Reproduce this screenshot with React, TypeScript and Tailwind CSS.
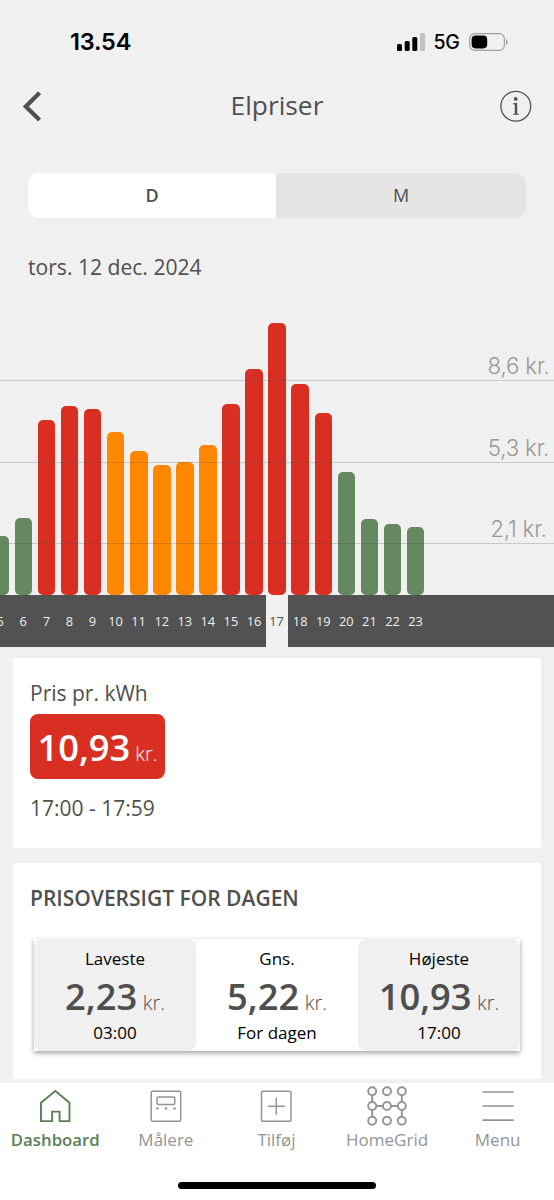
import React from "react";

type Level = "low" | "mid" | "high";

const HOURS: { hour: number; height: number; level: Level }[] = [
  { hour: 5, height: 59.5, level: "low" },
  { hour: 6, height: 77.5, level: "low" },
  { hour: 7, height: 175.7, level: "high" },
  { hour: 8, height: 189, level: "high" },
  { hour: 9, height: 186.5, level: "high" },
  { hour: 10, height: 163.3, level: "mid" },
  { hour: 11, height: 144.8, level: "mid" },
  { hour: 12, height: 130.8, level: "mid" },
  { hour: 13, height: 133.3, level: "mid" },
  { hour: 14, height: 150.4, level: "mid" },
  { hour: 15, height: 191.6, level: "high" },
  { hour: 16, height: 226.4, level: "high" },
  { hour: 17, height: 272.2, level: "high" },
  { hour: 18, height: 211.4, level: "high" },
  { hour: 19, height: 182.6, level: "high" },
  { hour: 20, height: 123.5, level: "low" },
  { hour: 21, height: 76.4, level: "low" },
  { hour: 22, height: 71.4, level: "low" },
  { hour: 23, height: 68.4, level: "low" },
];

const LEVEL_COLOR: Record<Level, string> = {
  low: "bg-[#64885f]",
  mid: "bg-[#ff8800]",
  high: "bg-[#d82f22]",
};

const SELECTED_HOUR = 17;

function StatusBar() {
  return (
    <div className="flex h-[72px] items-start justify-between pl-[70px] pr-[46px] pt-[27px] font-['Inter',sans-serif] text-black">
      <span className="text-[23.5px] font-semibold leading-[29px] tracking-[-0.2px]">13.54</span>
      <div className="flex h-[29px] items-center">
        <svg width="28" height="18" viewBox="0 0 28 18">
          <rect x="0" y="11" width="5" height="7" rx="1.5" />
          <rect x="7.7" y="8" width="5" height="10" rx="1.5" />
          <rect x="15.3" y="4" width="5" height="14" rx="1.5" />
          <rect x="23" y="0" width="5" height="18" rx="1.5" fill="#c2c2c2" />
        </svg>
        <span className="ml-[8.5px] w-[27px] pt-[2px] text-[19.5px] font-medium leading-[29px] tracking-[-0.3px]">5G</span>
        <svg className="ml-[8.5px]" width="39" height="18" viewBox="0 0 39 18">
          <rect x="0.6" y="0.6" width="34.8" height="16.8" rx="5.2" fill="none" stroke="#a0a0a0" strokeWidth="1.2" />
          <rect x="2.6" y="2.6" width="15.6" height="12.8" rx="3.8" />
          <path d="M37 6v6c1.1-.5 1.7-1.7 1.7-3S38.100 6.500 37 6z" fill="#a0a0a0" />
        </svg>
      </div>
    </div>
  );
}

function Header() {
  return (
    <header className="flex h-[68px] items-center justify-between pl-[22px] pr-[22px]">
      <svg width="32" height="32" viewBox="0 0 32 32" fill="none" stroke="#4f4f4f" strokeWidth="4.2">
        <path d="M17.6 2.800 3.800 16.500 17.600 30" />
      </svg>
      <h1 className="pb-[2px] text-[26.3px] leading-[34px] text-[#4f4f4f]">Elpriser</h1>
      <svg width="32" height="32" viewBox="0 0 32 32" fill="none" stroke="#4f4f4f">
        <circle cx="15.800" cy="16.200" r="14.900" strokeWidth="1.300" />
        <circle cx="15.700" cy="8.900" r="1.900" fill="#4f4f4f" stroke="none" />
        <path
          d="M13 13.300c1.700 0 2.800-.3 4.200-.8v10.300c0 .9.400 1.100 1.800 1.200v.8h-6v-.8c1.400-.1 1.800-.3 1.800-1.200v-7.300c0-1-.5-1.300-1.800-1.300z"
          fill="#4f4f4f"
          stroke="none"
        />
      </svg>
    </header>
  );
}

function PeriodSwitch() {
  return (
    <div className="mx-7 mt-[33px] flex h-[45px] overflow-hidden rounded-[11px] bg-[#e5e5e5] text-[18px] leading-[45px] text-[#4f4f4f]">
      <div className="w-[248px] rounded-r-[2px] bg-white text-center font-semibold">D</div>
      <div className="flex-1 text-center font-medium">M</div>
    </div>
  );
}

function GridLine({ label, size }: { label: string; size: string }) {
  return (
    <div className={`flex flex-col justify-end border-b border-[#4f4f4f]/25 ${size}`}>
      <span className="w-[71px] self-end pb-px text-center font-['Inter',sans-serif] text-[22.3px] font-light leading-[26px] tracking-[-0.2px] text-[#999]">
        {label}
      </span>
    </div>
  );
}

function PriceChart() {
  return (
    <section className="mt-[17px] w-full overflow-hidden">
      <div className="grid h-[296.4px] grid-cols-1 grid-rows-1">
        <div className="col-start-1 row-start-1 -ml-[11.3px] flex items-end">
          {HOURS.map(({ hour, height, level }) => (
            <div key={hour} className="flex w-[23.08px] shrink-0 justify-center">
              <div className={`w-[17.6px] rounded-[5px] ${LEVEL_COLOR[level]}`} style={{ height }} />
            </div>
          ))}
        </div>
        <div className="z-10 col-start-1 row-start-1 flex flex-col">
          <GridLine label="8,6 kr." size="h-[82px]" />
          <GridLine label="5,3 kr." size="h-[82px]" />
          <GridLine label="2,1 kr." size="h-[81px]" />
        </div>
      </div>
      <div className="flex h-[52px] bg-[#525252] text-[12.8px] leading-[52px] text-[#f0f0f0]">
        <div className="-ml-[11.4px] flex">
          {HOURS.map(({ hour }) => (
            <div
              key={hour}
              className={
                hour === SELECTED_HOUR
                  ? "w-[23.08px] shrink-0 border-r border-[#525252] bg-[#f0f0f0] text-center text-[#4f4f4f]"
                  : "w-[23.08px] shrink-0 text-center"
              }
            >
              {hour}
            </div>
          ))}
        </div>
      </div>
    </section>
  );
}

function CurrentPrice() {
  return (
    <section className="mx-[13px] mt-[10.6px] h-[190px] rounded-[2px] bg-white px-[17px] pt-[20px] text-[21px] text-[#4f4f4f]">
      <p className="leading-[30px]">Pris pr. kWh</p>
      <div className="mt-[6px] flex h-[65px] w-[135px] items-baseline justify-center rounded-[8px] bg-[#d82f22] leading-[67px] text-white">
        <span className="text-[36.3px] font-semibold">10,93</span>
        <span className="ml-[5px] text-[20px] font-light">kr.</span>
      </div>
      <p className="mt-[14px] leading-[30px]">17:00 - 17:59</p>
    </section>
  );
}

function Stat({ title, value, note, shaded }: { title: string; value: string; note: string; shaded?: boolean }) {
  return (
    <div className={`flex-1 pt-[8px] text-center text-[17px] text-black ${shaded ? "rounded-[8px] bg-[#f0f0f0]" : "bg-white"}`}>
      <p className="leading-[24px]">{title}</p>
      <p className="flex h-[50px] items-baseline justify-center leading-[51px] text-[#4f4f4f]">
        <span className="text-[36.3px] font-semibold">{value}</span>
        <span className="ml-[5.5px] text-[20px] font-light">kr.</span>
      </p>
      <p className="leading-[24px]">{note}</p>
    </div>
  );
}

function DayOverview() {
  return (
    <section className="mx-[13px] mt-[15px] h-[216px] shrink-0 rounded-[2px] bg-white pl-[17px] pr-[17px] pt-[20px]">
      <h2 className="text-[21px] font-[550] leading-[30px] text-[#4f4f4f]">PRISOVERSIGT FOR DAGEN</h2>
      <div className="ml-[4px] mr-[4px] mt-[26px] flex h-[112px] bg-white shadow-[0_2px_5px_rgba(0,0,0,0.38)]">
        <Stat title="Laveste" value="2,23" note="03:00" shaded />
        <Stat title="Gns." value="5,22" note="For dagen" />
        <Stat title="Højeste" value="10,93" note="17:00" shaded />
      </div>
    </section>
  );
}

function HomeIcon() {
  return (
    <svg width="40" height="40" viewBox="0 0 40 40" fill="none" stroke="currentColor" strokeWidth="1.900">
      <path d="M6 16.800 20.300 5l14.200 11.800v18.300H24.600v-9.500h-7.500v9.500H6z" />
    </svg>
  );
}

function MeterIcon() {
  return (
    <svg width="40" height="40" viewBox="0 0 40 40" fill="none" stroke="currentColor" strokeWidth="1.500">
      <rect x="5.200" y="5.300" width="29.500" height="30" rx="1.500" />
      <rect x="11" y="11.100" width="17.800" height="7.500" rx="1.500" />
      <g fill="currentColor" stroke="none">
        <circle cx="11.500" cy="22.500" r="1.200" />
        <circle cx="20" cy="22.500" r="1.200" />
        <circle cx="28.500" cy="22.500" r="1.200" />
      </g>
    </svg>
  );
}

function AddIcon() {
  return (
    <svg width="40" height="40" viewBox="0 0 40 40" fill="none" stroke="currentColor" strokeWidth="1.500">
      <rect x="5.500" y="5.300" width="29.500" height="30" rx="1.500" />
      <path d="M20.300 11.800v17M11.800 20.300h17" />
    </svg>
  );
}

function HomeGridIcon() {
  const points = [5.2, 20, 34.8];
  return (
    <svg width="40" height="40" viewBox="0 0 40 40" fill="none" stroke="currentColor" strokeWidth="1.900">
      <path d="M5.200 9v7M5.200 24v7M34.800 9v7M34.800 24v7M9 20h7M24 20h7" />
      {points.map((y) => points.map((x) => <circle key={`${x}-${y}`} cx={x} cy={y} r="4" />))}
    </svg>
  );
}

function MenuIcon() {
  return (
    <svg width="40" height="40" viewBox="0 0 40 40" fill="none" stroke="currentColor" strokeWidth="1.700">
      <path d="M4.500 6h31.200M4.500 20h31.200M4.500 34.200h31.200" />
    </svg>
  );
}

const TABS = [
  { label: "Dashboard", icon: <HomeIcon />, active: true },
  { label: "Målere", icon: <MeterIcon /> },
  { label: "Tilføj", icon: <AddIcon /> },
  { label: "HomeGrid", icon: <HomeGridIcon /> },
  { label: "Menu", icon: <MenuIcon /> },
];

function TabBar() {
  return (
    <nav className="mt-[4px] flex min-h-0 flex-1 flex-col items-center bg-white">
      <div className="flex w-full pr-[1px] pt-[3px]">
        {TABS.map(({ label, icon, active }) => (
          <div
            key={label}
            className={`flex w-1/5 shrink-0 flex-col items-center leading-[24px] ${
              active ? "text-[16.800px] font-[570] text-[#5b8058]" : "text-[17px] text-[#949494]"
            }`}
          >
            {icon}
            <span className="mt-[2px]">{label}</span>
          </div>
        ))}
      </div>
      <div className="mt-[30px] h-[7px] w-[198px] rounded-full bg-black" />
    </nav>
  );
}

export default function App() {
  return (
    <div className="flex h-[1200px] w-[554px] flex-col overflow-hidden bg-[#f0f0f0] font-['Open_Sans',sans-serif]">
      <StatusBar />
      <Header />
      <PeriodSwitch />
      <p className="mt-[34px] pl-7 text-[21.1px] leading-[30px] text-[#4f4f4f]">tors. 12 dec. 2024</p>
      <PriceChart />
      <CurrentPrice />
      <DayOverview />
      <TabBar />
    </div>
  );
}
